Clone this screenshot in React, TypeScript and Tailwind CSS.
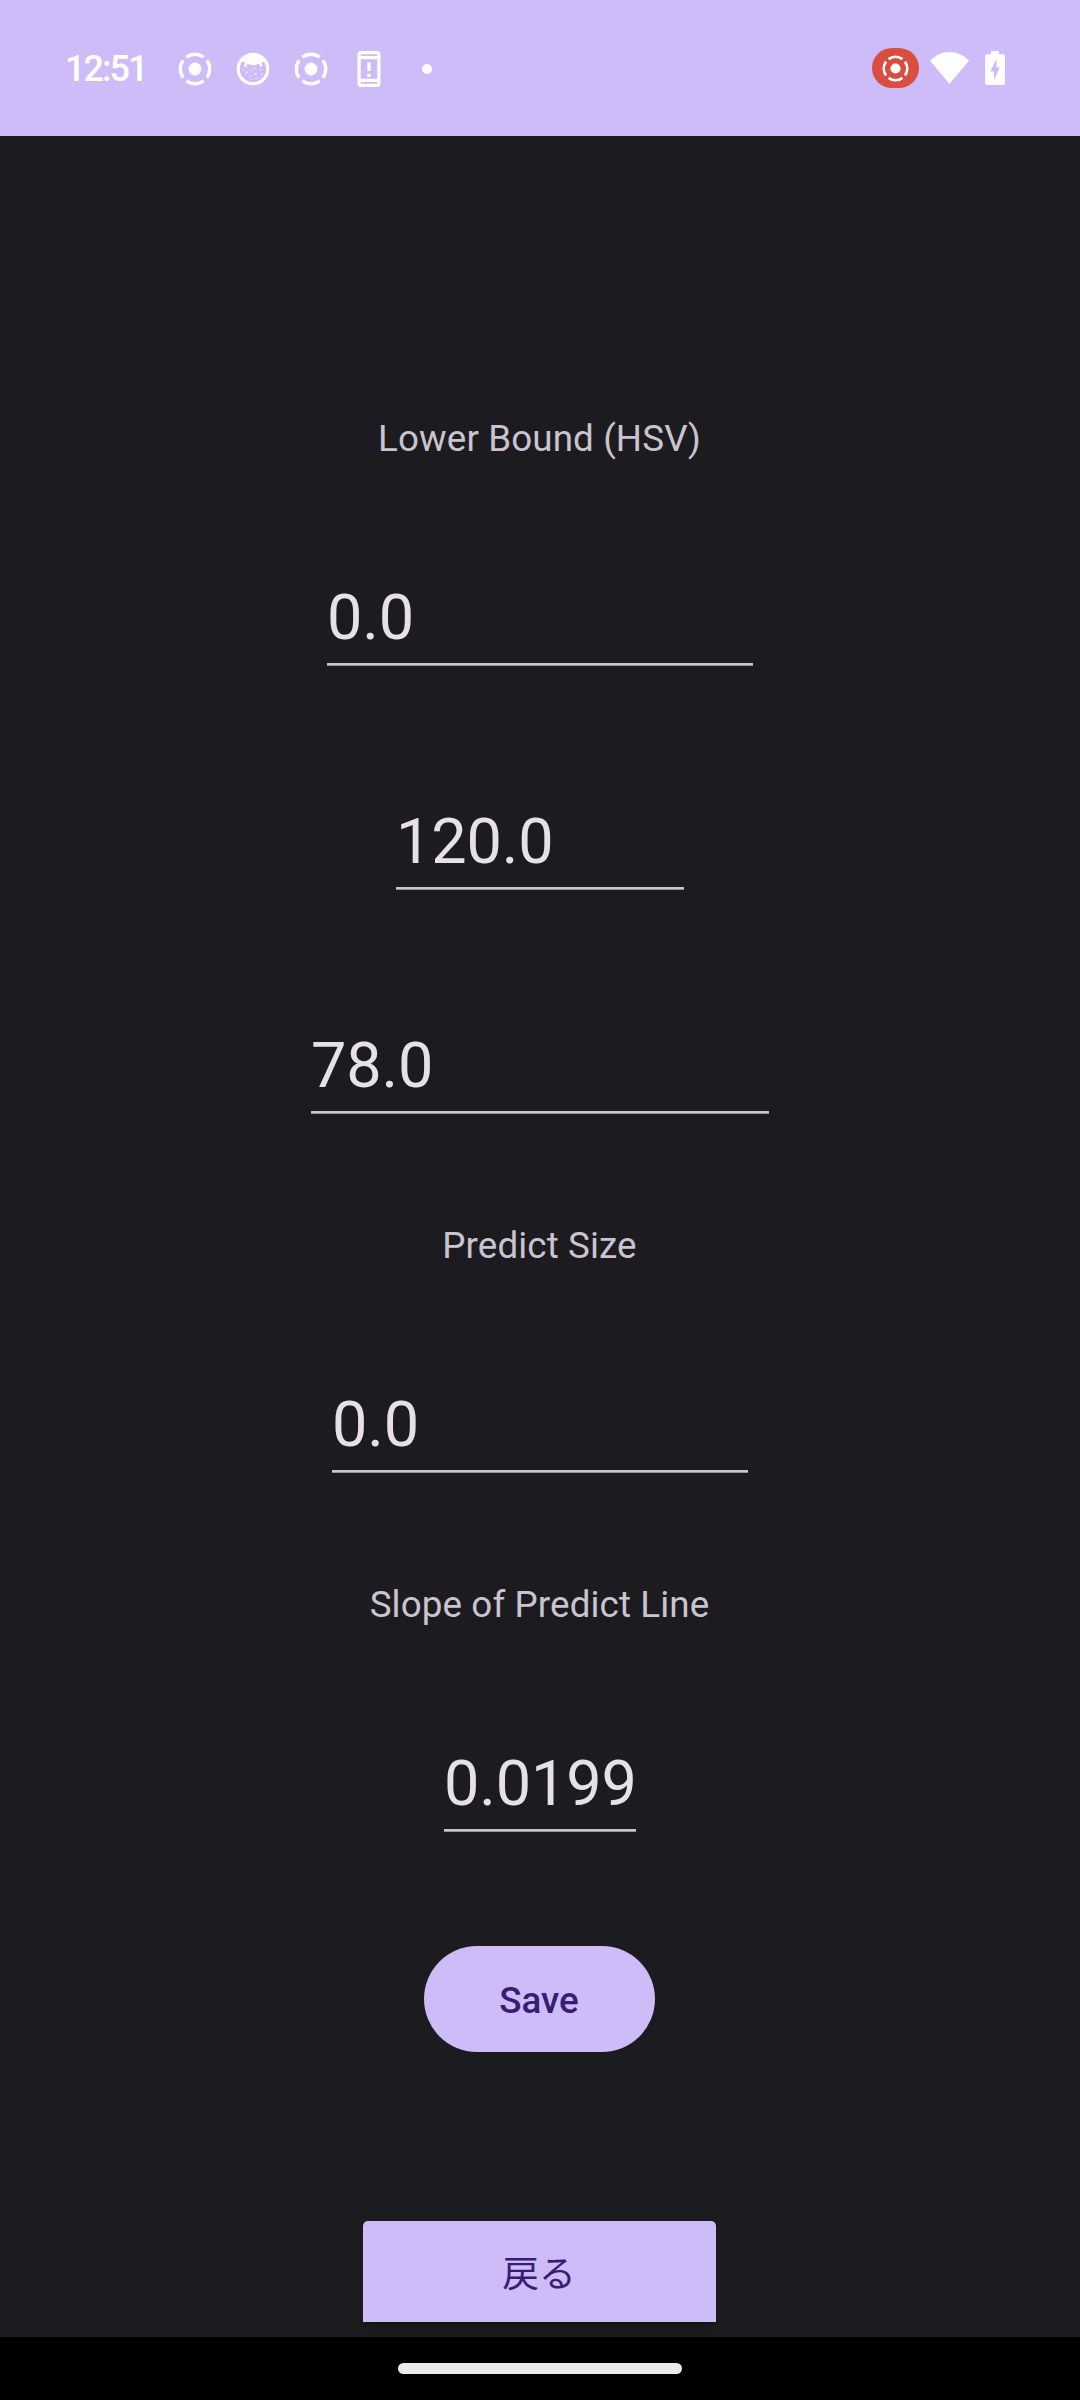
import React from "react";

function RecordIcon({ className }: { className: string }) {
  return (
    <svg viewBox="-17 -17 34 34" className={className} fill="none" stroke="white" strokeWidth="3.4">
      <circle r="6.4" fill="white" stroke="none" />
      {[0, 90, 180, 270].map((angle) => (
        <path key={angle} transform={`rotate(${angle})`} d="M-8.7 -11.9A14.8 14.8 0 0 1 8.7 -11.9" />
      ))}
    </svg>
  );
}

function FaceIcon() {
  return (
    <svg viewBox="-17 -17 34 34" className="size-[34px]">
      <circle r="14.8" fill="none" stroke="white" strokeWidth="3.1" />
      <path
        fill="white"
        d="M-14 -7C-11 -12 -6 -15 0 -15C6 -15 11 -12 14 -7L8.500 -7L9.500 -2.500L7 -2.500L5.500 -5.500C3 -3.300 -3 -3.300 -5.500 -5.500L-6.500 -2L-9 -2.500L-8 -7Z"
      />
      <g fill="white" fillOpacity="0.75">
        <circle cx="-6.5" cy="3.5" r="1" />
        <circle cx="1.5" cy="-0.5" r="0.8" />
        <circle cx="2.5" cy="5" r="1.1" />
        <circle cx="7.5" cy="0.5" r="0.8" />
        <circle cx="-2" cy="1" r="0.7" />
        <circle cx="-2.5" cy="7" r="0.8" />
        <circle cx="8.5" cy="5" r="0.8" />
        <circle cx="3" cy="9.5" r="0.8" />
        <circle cx="-10" cy="1" r="0.7" />
        <circle cx="-1" cy="10" r="0.6" />
      </g>
    </svg>
  );
}

function PhoneAlertIcon() {
  return (
    <svg viewBox="-17 -18 34 36" className="h-[36px] w-[34px]">
      <rect x="-9.9" y="-16.4" width="19.8" height="32.8" rx="2" fill="none" stroke="white" strokeWidth="3.2" />
      <path d="M-10 -11.4H10M-10 11.4H10" stroke="white" strokeWidth="3.2" />
      <path d="M0 -6.5V2M0 4.8V8" stroke="white" strokeWidth="3.4" />
    </svg>
  );
}

function StatusBar() {
  return (
    <header className="flex h-[136px] shrink-0 items-center bg-[#cdbcf8] pt-0.5">
      <span className="ml-[65px] w-[113px] whitespace-nowrap text-[36px] font-medium leading-none tracking-[-2px] text-white">
        12:51
      </span>
      <div className="flex items-center gap-6">
        <RecordIcon className="size-[34px]" />
        <FaceIcon />
        <RecordIcon className="size-[34px]" />
        <PhoneAlertIcon />
        <span className="mx-3 size-2.5 rounded-full bg-white" />
      </div>
      <div className="ml-auto mr-[75px] flex items-center">
        <div className="-mt-0.5 flex h-10 w-[47px] items-center justify-center rounded-[20px] bg-[#d94f3f]">
          <RecordIcon className="size-[27px]" />
        </div>
        <svg viewBox="0 0 39 32" className="-mt-0.5 ml-[11px] h-8 w-[39px]">
          <path d="M0 8.8C5.5 3 12 0 19.5 0S33.500 3 39 8.800L19.500 32Z" fill="white" />
        </svg>
        <svg viewBox="0 0 20 34" className="-mt-0.5 ml-4 h-[34px] w-5">
          <path
            fillRule="evenodd"
            fill="white"
            d="M6 0H14V3.200H18Q20 3.200 20 5.200V32Q20 34 18 34H2Q0 34 0 32V5.200Q0 3.200 2 3.200H6ZM11.500 8L5.300 20.500H9V29L14.800 16.500H11.500Z"
          />
        </svg>
      </div>
    </header>
  );
}

function Label({ className, children }: { className: string; children: React.ReactNode }) {
  return (
    <div
      className={`mr-px whitespace-nowrap text-[36.75px] leading-[43px] tracking-[0.12px] text-[#cac4d0] ${className}`}
    >
      {children}
    </div>
  );
}

function Field({ className, value }: { className: string; value: string }) {
  return (
    <div className={className}>
      <div className="whitespace-nowrap pb-2 pt-px text-[63px] leading-[74px] tracking-[-0.15px] text-[#e6e1e5]">
        {value}
      </div>
      <div className="h-0.5 bg-[#cac4d0]" />
      <div className="h-px bg-[#97929c]" />
    </div>
  );
}

export default function App() {
  return (
    <div className="flex h-[2400px] w-[1080px] flex-col overflow-hidden bg-[#1c1b1f] font-['Roboto',sans-serif]">
      <StatusBar />
      <main className="flex flex-1 flex-col items-center pt-[281px]">
        <Label className="">Lower Bound (HSV)</Label>
        <Field className="mt-[120px] w-[426px]" value="0.0" />
        <Field className="mt-[138px] w-[288px]" value="120.0" />
        <Field className="mt-[138px] w-[458px]" value="78.0" />
        <Label className="mt-[110px]">Predict Size</Label>
        <Field className="mt-[120px] w-[416px]" value="0.0" />
        <Label className="mt-[110px]">Slope of Predict Line</Label>
        <Field className="mt-[120px] w-[192px]" value="0.0199" />
        <button className="mt-[114px] mr-px h-[106px] w-[231px] rounded-full bg-[#cdbcf8] pr-px pt-1 text-[36.75px] font-medium text-[#371e73]">
          Save
        </button>
        <button className="mt-[169px] mr-px h-[101px] w-[353px] rounded-t-[5px] bg-[#cdbcf8] pr-px font-['Noto_Sans_CJK_JP',sans-serif] text-[36.75px] text-[#371e73] shadow-[0_5px_6px_rgba(0,0,0,0.2)]">
          戻る
        </button>
      </main>
      <nav className="flex h-[63px] shrink-0 items-center justify-center bg-black">
        <div className="h-[11px] w-[284px] rounded-full bg-[#ebebeb]" />
      </nav>
    </div>
  );
}
